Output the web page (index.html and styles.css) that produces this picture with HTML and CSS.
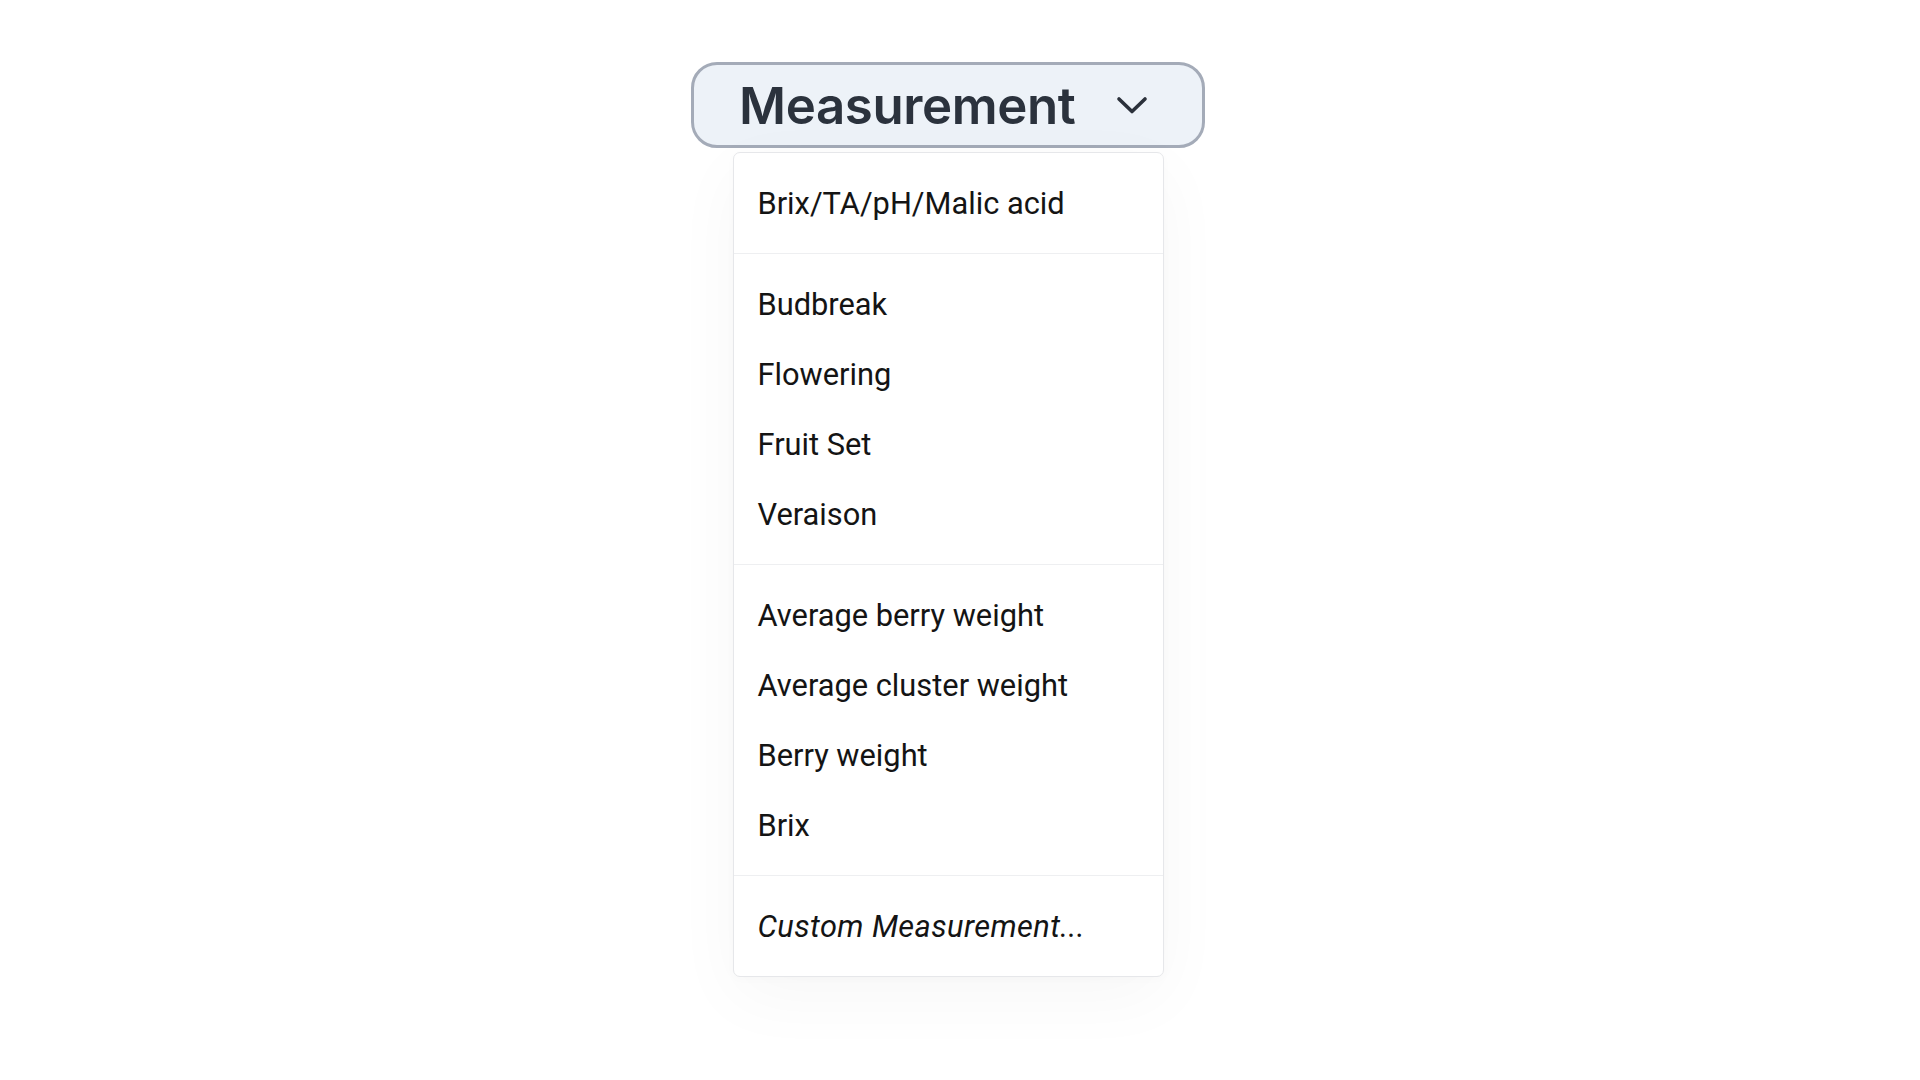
FILE: index.html
```html
<!DOCTYPE html>
<html>
<head>
<meta charset="utf-8">
<link rel="stylesheet" href="styles.css">
</head>
<body>
<div class="stage">
  <button class="trigger">
    <span class="trigger-label">Measurement</span>
    <svg class="chevron" width="32" height="20" viewBox="0 0 32 20"><path d="M3 3 L16 15.5 L29 3" fill="none" stroke="#2b313b" stroke-width="3.6" stroke-linecap="round" stroke-linejoin="round"/></svg>
  </button>
  <div class="menu">
    <div class="group">
      <div class="item">Brix/TA/pH/Malic acid</div>
    </div>
    <div class="group">
      <div class="item">Budbreak</div>
      <div class="item">Flowering</div>
      <div class="item">Fruit Set</div>
      <div class="item">Veraison</div>
    </div>
    <div class="group">
      <div class="item">Average berry weight</div>
      <div class="item">Average cluster weight</div>
      <div class="item">Berry weight</div>
      <div class="item">Brix</div>
    </div>
    <div class="group">
      <div class="item custom">Custom Measurement...</div>
    </div>
  </div>
</div>
</body>
</html>
```
FILE: styles.css
```css
html, body {
  margin: 0;
  padding: 0;
  background: #ffffff;
  height: 100%;
}
.stage {
  display: flex;
  flex-direction: column;
  align-items: center;
  padding-top: 62px;
  padding-right: 24px;
  box-sizing: border-box;
}
.trigger {
  width: 514px;
  height: 86px;
  box-sizing: border-box;
  border: 3px solid #a4abb8;
  border-radius: 26px;
  background: #edf2f8;
  display: flex;
  align-items: center;
  padding: 0 0 0 45px;
  margin: 0;
  cursor: pointer;
}
.trigger-label {
  font-family: Inter, "Noto Sans", sans-serif;
  font-weight: 600;
  font-size: 51px;
  color: #2b323d;
  letter-spacing: -0.4px;
  line-height: 1;
}
.chevron {
  margin-left: 41px;
  margin-top: 2px;
}
.menu {
  margin-top: 4px;
  width: 431px;
  box-sizing: border-box;
  background: #ffffff;
  border: 1px solid #e6e7ea;
  border-radius: 7px;
  box-shadow: 0 20px 70px rgba(0, 0, 0, 0.035), 0 2px 10px rgba(0, 0, 0, 0.02);
}
.group {
  padding: 15px 0;
  border-top: 1px solid #eeeff1;
}
.group:first-child {
  border-top: none;
}
.item {
  height: 70px;
  display: flex;
  align-items: center;
  padding-left: 24px;
  font-family: Roboto, "Liberation Sans", sans-serif;
  font-size: 30.8px;
  color: #141414;
}
.custom {
  font-style: italic;
  letter-spacing: 0.4px;
}
```
